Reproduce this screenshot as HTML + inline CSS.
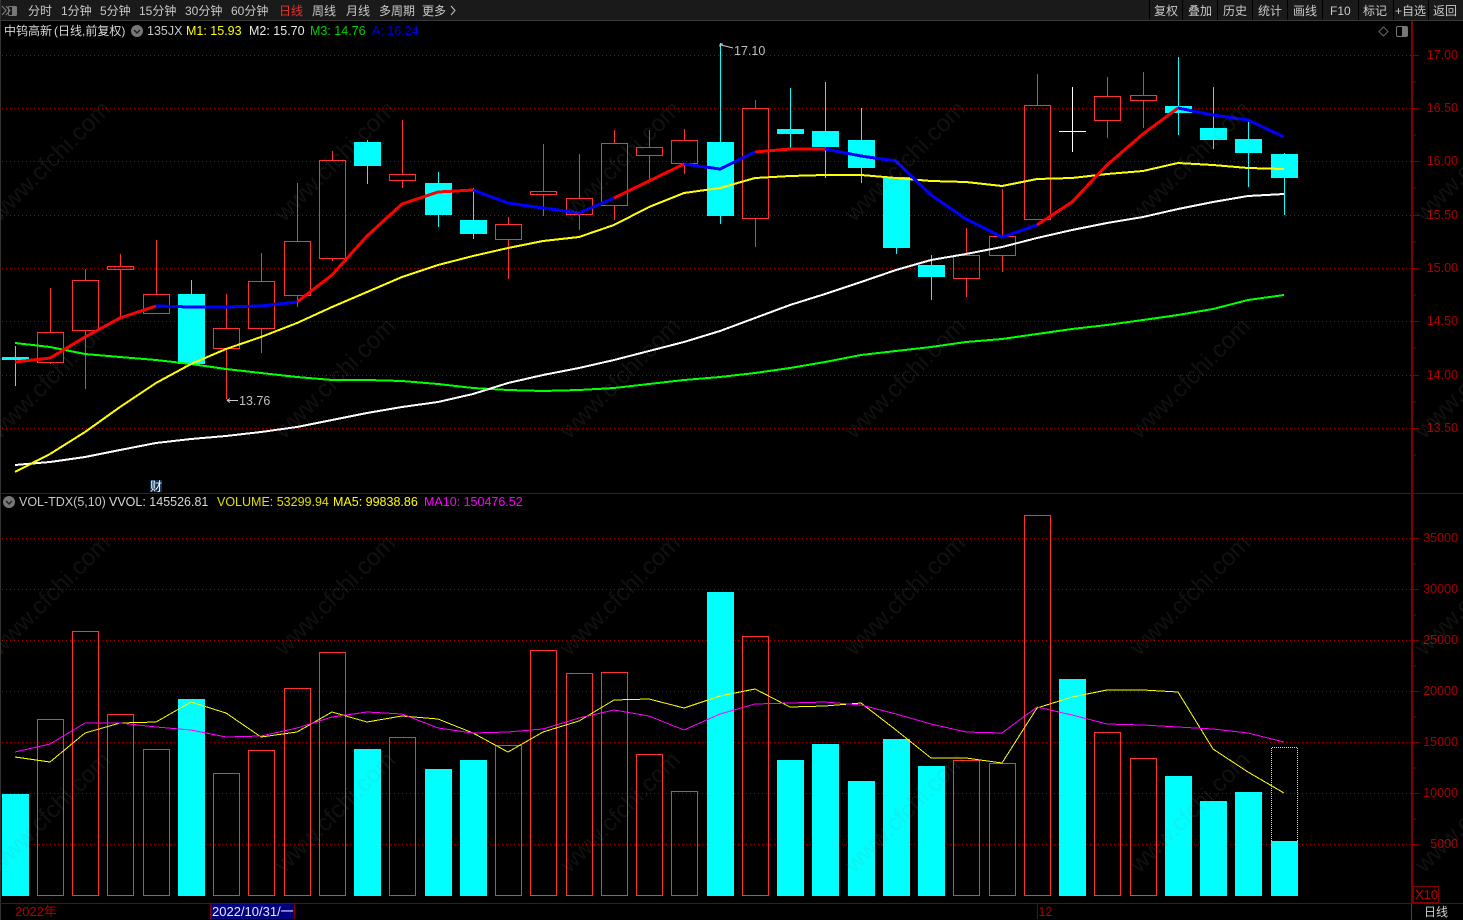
<!DOCTYPE html>
<html lang="zh"><head><meta charset="utf-8"><title>中钨高新</title>
<style>
html,body{margin:0;padding:0;background:#000;width:1463px;height:920px;overflow:hidden}
svg{display:block}
text{font-family:"Liberation Sans","Noto Sans CJK SC",sans-serif;white-space:pre}
.tb{font-size:12px;fill:#c8c8c8}
.inf{font-size:12.5px}
.ax{font-size:12.5px;fill:#a80000;text-anchor:end}
</style></head><body>
<svg width="1463" height="920" viewBox="0 0 1463 920" xmlns="http://www.w3.org/2000/svg">
<rect width="1463" height="920" fill="#000"/>
<!-- toolbar -->
<rect width="1463" height="20" fill="#1a1a1a"/>
<rect y="20" width="1463" height="1" fill="#3a3a3a"/>
<rect y="0" x="0" width="1" height="920" fill="#333"/>
<path d="M2 6l4 4.500-4 4.500M6 6l4 4.500-4 4.500" fill="none" stroke="#777" stroke-width="1.200"/>
<rect x="8.500" y="6.500" width="8" height="9" rx="1" fill="none" stroke="#777"/><rect x="12" y="7" width="4" height="8" fill="#777"/>
<text class="tb" x="28" y="15">分时</text><text class="tb" x="61" y="15">1分钟</text><text class="tb" x="100" y="15">5分钟</text><text class="tb" x="139" y="15">15分钟</text><text class="tb" x="185" y="15">30分钟</text><text class="tb" x="231" y="15">60分钟</text>
<text class="tb" x="279" y="15" style="fill:#e83030">日线</text><text class="tb" x="312" y="15">周线</text><text class="tb" x="346" y="15">月线</text><text class="tb" x="379" y="15">多周期</text><text class="tb" x="422" y="15">更多</text><path d="M451 6l4 4.500-4 4.500" fill="none" stroke="#c8c8c8"/>
<path d="M1149.500 0V20M1182.500 0V20M1217.500 0V20M1252.500 0V20M1287.500 0V20M1322.500 0V20M1358.500 0V20M1393.500 0V20M1428.500 0V20" stroke="#000" shape-rendering="crispEdges"/>
<text class="tb" x="1154" y="15">复权</text><text class="tb" x="1188" y="15">叠加</text><text class="tb" x="1223" y="15">历史</text><text class="tb" x="1258" y="15">统计</text><text class="tb" x="1293" y="15">画线</text><text class="tb" x="1330" y="15">F10</text><text class="tb" x="1363" y="15">标记</text><text class="tb" x="1395" y="15">+自选</text><text class="tb" x="1433" y="15">返回</text>
<!-- info -->
<text x="4" y="35" font-size="12" fill="#d8d8d8">中钨高新</text>
<text x="54" y="35" font-size="12" fill="#d8d8d8">(日线,前复权)</text>
<circle cx="137" cy="31" r="6" fill="#777"/><path d="M134 30l3 3 3-3" fill="none" stroke="#222" stroke-width="1.500"/>
<text class="inf" x="147" y="35" fill="#c8c8c8">135JX</text>
<text class="inf" x="186" y="35" fill="#ffff00">M1: 15.93</text>
<text class="inf" x="249" y="35" fill="#e8e8e8">M2: 15.70</text>
<text class="inf" x="310" y="35" fill="#00d000">M3: 14.76</text>
<text class="inf" x="372" y="35" fill="#0000e0">A: 16.24</text>
<path d="M1383.500 27l4.500 4.500-4.500 4.500-4.500-4.500z" fill="none" stroke="#666"/>
<rect x="1396.500" y="26.500" width="11" height="10" rx="1.500" fill="none" stroke="#777"/><rect x="1402" y="27" width="5" height="9" fill="#777"/>
<!-- grid -->
<path d="M2 55.500H1411M2 108.500H1411M2 161.500H1411M2 215.500H1411M2 268.500H1411M2 321.500H1411M2 375.500H1411M2 428.500H1411M2 538.500H1411M2 589.500H1411M2 640.500H1411M2 691.500H1411M2 742.500H1411M2 793.500H1411M2 844.500H1411" stroke="#aa0000" stroke-dasharray="1 3" shape-rendering="crispEdges" fill="none"/>
<!-- frame -->
<rect y="493" width="1463" height="1" fill="#800000"/>
<rect y="903" width="1463" height="1" fill="#800000"/>
<rect x="1411" y="21" width="2" height="882" fill="#800000"/>
<rect x="1411" y="904" width="1" height="16" fill="#444"/>
<path d="M1413 55.500h6M1413 82h3M1413 108.500h6M1413 135h3M1413 161.500h6M1413 188h3M1413 215.500h6M1413 242h3M1413 268.500h6M1413 295h3M1413 321.500h6M1413 348h3M1413 375.500h6M1413 402h3M1413 428.500h6M1413 455h3M1413 538.500h6M1413 564h3M1413 589.500h6M1413 615h3M1413 640.500h6M1413 666h3M1413 691.500h6M1413 717h3M1413 742.500h6M1413 768h3M1413 793.500h6M1413 819h3M1413 844.500h6" stroke="#800000" shape-rendering="crispEdges"/>
<!-- axis labels -->
<g class="ax"><text class="ax" x="1458" y="59">17.00</text><text class="ax" x="1458" y="112">16.50</text><text class="ax" x="1458" y="165">16.00</text><text class="ax" x="1458" y="219">15.50</text><text class="ax" x="1458" y="272">15.00</text><text class="ax" x="1458" y="325">14.50</text><text class="ax" x="1458" y="379">14.00</text><text class="ax" x="1458" y="432">13.50</text>
<text class="ax" x="1458" y="542">35000</text><text class="ax" x="1458" y="593">30000</text><text class="ax" x="1458" y="644">25000</text><text class="ax" x="1458" y="695">20000</text><text class="ax" x="1458" y="746">15000</text><text class="ax" x="1458" y="797">10000</text><text class="ax" x="1458" y="848">5000</text></g>
<rect x="1413.500" y="886.500" width="25" height="16" fill="none" stroke="#800000" shape-rendering="crispEdges"/>
<text x="1415" y="899" font-size="13" fill="#c00000">X10</text>
<text x="1424" y="916" font-size="12" fill="#d0d0d0">日线</text>
<!-- candles: red hollow -->
<path fill="none" stroke="#ff3232" shape-rendering="crispEdges" d="M37.500 332.500h26v30h-26zM50.500 288V332M50.500 363V364M72.500 280.500h26v50h-26zM85.500 269V280M85.500 331V389M107.500 266.500h26v3h-26zM120.500 254V266M120.500 270V318M143.500 294.500h26v19h-26zM156.500 240V294M213.500 328.500h26v20h-26zM226.500 294V328M226.500 349V399M248.500 281.500h26v47h-26zM261.500 253V281M261.500 329V353M284.500 241.500h26v54h-26zM297.500 183V241M297.500 296V307M319.500 160.500h26v98h-26zM332.500 151V160M332.500 259V261M389.500 174.500h26v6h-26zM402.500 120V174M402.500 181V188M495.500 224.500h26v15h-26zM508.500 217V224M508.500 240V279M530.500 191.500h26v3h-26zM543.500 144V191M543.500 195V216M566.500 198.500h26v16h-26zM579.500 154V198M579.500 215V230M601.500 143.500h26v62h-26zM614.500 130V143M614.500 206V220M636.500 147.500h26v8h-26zM649.500 130V147M649.500 156V180M671.500 140.500h26v23h-26zM684.500 129V140M684.500 164V174M742.500 108.500h26v110h-26zM755.500 100V108M755.500 219V247M953.500 255.500h26v23h-26zM966.500 228V255M966.500 279V297M989.500 236.500h26v19h-26zM1002.500 189V236M1002.500 256V272M1024.500 105.500h26v114h-26zM1037.500 74V105M1094.500 96.500h26v24h-26zM1107.500 77V96M1107.500 121V138M1130.500 95.500h26v5h-26zM1143.500 72V95M1143.500 101V128"/>
<path d="M1059 131.500h27M1072.500 87V152" stroke="#fff" fill="none" shape-rendering="crispEdges"/>
<!-- candles: cyan -->
<path stroke="#00ffff" fill="none" shape-rendering="crispEdges" d="M15.500 346V386M191.500 280V294M367.500 140V184M438.500 172V227M473.500 188V239M720.500 43V224M790.500 88V148M825.500 82V178M861.500 108V183M896.500 177V254M931.500 255V300M1178.500 57V135M1213.500 87V149M1248.500 120V187M1284.500 153V215"/>
<g fill="#00ffff" shape-rendering="crispEdges">
<rect x="2" y="357" width="27" height="3"/><rect x="178" y="294" width="27" height="70"/><rect x="354" y="142" width="27" height="24"/><rect x="425" y="183" width="27" height="32"/><rect x="460" y="220" width="27" height="14"/><rect x="707" y="142" width="27" height="74"/><rect x="777" y="129" width="27" height="5"/><rect x="812" y="131" width="27" height="16"/><rect x="848" y="140" width="27" height="28"/><rect x="883" y="177" width="27" height="71"/><rect x="918" y="265" width="27" height="12"/><rect x="1165" y="106" width="27" height="7"/><rect x="1200" y="128" width="27" height="12"/><rect x="1235" y="139" width="27" height="14"/><rect x="1271" y="154" width="27" height="24"/>
</g>
<!-- MA lines -->
<g fill="none" shape-rendering="crispEdges" stroke-linejoin="round">
<polyline stroke="#00ff00" stroke-width="2" points="15,343 50,347 85,354 120,357 156,360 191,364 226,369 261,373 297,377 332,380 367,380 402,381 438,384 473,388 508,390 543,391 579,390 614,388 649,384 684,380 720,377 755,373 790,368 825,362 861,355 896,351 931,347 966,342 1002,339 1037,334 1072,329 1107,325 1143,320 1178,315 1213,309 1248,300 1284,295"/>
<polyline stroke="#ffffff" stroke-width="2" points="15,465 50,462 85,457 120,450 156,443 191,439 226,436 261,432 297,427 332,420 367,413 402,407 438,402 473,394 508,383 543,375 579,368 614,360 649,351 684,342 720,331 755,318 790,305 825,294 861,282 896,270 931,260 966,254 1002,247 1037,238 1072,230 1107,223 1143,217 1178,209 1213,202 1248,196 1284,194"/>
<polyline stroke="#ffff00" stroke-width="2" points="15,472 50,454 85,432 120,407 156,383 191,364 226,349 261,337 297,323 332,307 367,292 402,277 438,265 473,256 508,248 543,241 579,237 614,225 649,207 684,193 720,188 755,178 790,176 825,175 861,175 896,178 931,181 966,182 1002,186 1037,179 1072,178 1107,174 1143,171 1178,163 1213,165 1248,168 1284,169"/>
<g stroke-width="3" stroke="#ff0000">
<polyline points="15,362 50,358 85,337 120,318 156,306"/>
<polyline points="297,302 332,275 367,236 402,204 438,192 473,190"/>
<polyline points="614,198 649,181 684,164"/>
<polyline points="755,152 790,149 825,149"/>
<polyline points="1037,225 1072,202 1107,165 1143,134 1178,108"/>
</g>
<g stroke-width="3" stroke="#0000ff">
<polyline points="156,306 191,307 226,307 261,306 297,302"/>
<polyline points="473,190 508,203 543,208 579,213 614,198"/>
<polyline points="684,164 720,169 755,152"/>
<polyline points="825,149 861,156 896,161 931,195 966,219 1002,237 1037,225"/>
<polyline points="1178,108 1213,115 1248,120 1284,137"/>
</g>
</g>
<!-- annotations -->
<path d="M720 44h3M720 44v3M721 45l12 3" stroke="#ccc" fill="none"/>
<text x="734" y="55" font-size="12.500" fill="#c0c0c0">17.10</text>
<path d="M227 400.500h11M227 400.500l3-2M227 400.500l3 2" stroke="#ccc" fill="none"/>
<text x="239" y="405" font-size="12.500" fill="#c0c0c0">13.76</text>
<rect x="150" y="480" width="12" height="12" fill="#0f2f52"/>
<text x="150" y="490.500" font-size="12" fill="#fff">财</text>
<!-- vol info -->
<circle cx="9" cy="502" r="6" fill="#777"/><path d="M6 501l3 3 3-3" fill="none" stroke="#222" stroke-width="1.500"/>
<text class="inf" x="19" y="506" fill="#c8c8c8">VOL-TDX(5,10)</text>
<text class="inf" x="109" y="506" fill="#d8d8d8">VVOL: 145526.81</text>
<text class="inf" x="217" y="506" fill="#e0e000">VOLUME: 53299.94</text>
<text class="inf" x="333" y="506" fill="#ffff00">MA5: 99838.86</text>
<text class="inf" x="424" y="506" fill="#ff00ff">MA10: 150476.52</text>
<!-- volume bars -->
<path fill="none" stroke="#ff3232" shape-rendering="crispEdges" d="M37.500 719.500h26v176h-26zM72.500 631.500h26v264h-26zM107.500 714.500h26v181h-26zM143.500 749.500h26v146h-26zM213.500 773.500h26v122h-26zM248.500 750.500h26v145h-26zM284.500 688.500h26v207h-26zM319.500 652.500h26v243h-26zM389.500 737.500h26v158h-26zM495.500 745.500h26v150h-26zM530.500 650.500h26v245h-26zM566.500 673.500h26v222h-26zM601.500 672.500h26v223h-26zM636.500 754.500h26v141h-26zM671.500 791.500h26v104h-26zM742.500 636.500h26v259h-26zM953.500 760.500h26v135h-26zM989.500 763.500h26v132h-26zM1024.500 515.500h26v380h-26zM1094.500 732.500h26v163h-26zM1130.500 758.500h26v137h-26z"/>
<g fill="#00ffff" shape-rendering="crispEdges">
<rect x="2" y="794" width="27" height="102"/><rect x="178" y="699" width="27" height="197"/><rect x="354" y="749" width="27" height="147"/><rect x="425" y="769" width="27" height="127"/><rect x="460" y="760" width="27" height="136"/><rect x="707" y="592" width="27" height="304"/><rect x="777" y="760" width="27" height="136"/><rect x="812" y="744" width="27" height="152"/><rect x="848" y="781" width="27" height="115"/><rect x="883" y="739" width="27" height="157"/><rect x="918" y="766" width="27" height="130"/><rect x="1059" y="679" width="27" height="217"/><rect x="1165" y="776" width="27" height="120"/><rect x="1200" y="801" width="27" height="95"/><rect x="1235" y="792" width="27" height="104"/><rect x="1271" y="841" width="27" height="55"/>
</g>
<path d="M1271.500 841V747.500H1297.500V841" fill="none" stroke="#e8e84a" stroke-dasharray="1 1" shape-rendering="crispEdges"/>
<g fill="none" shape-rendering="crispEdges">
<polyline stroke="#ffff00" points="15,757 50,762 85,733 120,723 156,722 191,702 226,713 261,737 297,732 332,712 367,722 402,716 438,719 473,733 508,752 543,732 579,721 614,700 649,699 684,708 720,696 755,689 790,707 825,706 861,703 896,730 931,758 966,758 1002,763 1037,708 1072,697 1107,690 1143,690 1178,692 1213,749 1248,772 1284,793"/>
<polyline stroke="#ff00ff" points="15,752 50,744 85,723 120,723 156,727 191,730 226,737 261,736 297,728 332,717 367,712 402,714 438,728 473,733 508,732 543,729 579,718 614,710 649,716 684,730 720,714 755,704 790,703 825,702 861,705 896,714 931,724 966,732 1002,733 1037,707 1072,715 1107,724 1143,725 1178,727 1213,729 1248,733 1284,742"/>
</g>
<!-- bottom axis -->
<text x="15" y="916" font-size="13" fill="#b00000">2022年</text>
<rect x="211" y="904" width="84" height="15" fill="#00007f"/>
<path d="M210.500 903V919M294.500 903V919" stroke="#800000" shape-rendering="crispEdges"/>
<text x="212" y="916" font-size="13" fill="#e8e8ff">2022/10/31/一</text>
<path d="M1037.500 904V919" stroke="#800000" shape-rendering="crispEdges"/>
<text x="1038.500" y="916" font-size="12.500" fill="#b00000">12</text>
<!-- watermark -->
<g font-size="24" fill="#808080" fill-opacity="0.13" text-anchor="middle">
<text transform="translate(50,161) rotate(-45) translate(0,8)">www.cfchi.com</text><text transform="translate(335,161) rotate(-45) translate(0,8)">www.cfchi.com</text><text transform="translate(620,161) rotate(-45) translate(0,8)">www.cfchi.com</text><text transform="translate(905,161) rotate(-45) translate(0,8)">www.cfchi.com</text><text transform="translate(1190,161) rotate(-45) translate(0,8)">www.cfchi.com</text><text transform="translate(1475,161) rotate(-45) translate(0,8)">www.cfchi.com</text>
<text transform="translate(50,378) rotate(-45) translate(0,8)">www.cfchi.com</text><text transform="translate(335,378) rotate(-45) translate(0,8)">www.cfchi.com</text><text transform="translate(620,378) rotate(-45) translate(0,8)">www.cfchi.com</text><text transform="translate(905,378) rotate(-45) translate(0,8)">www.cfchi.com</text><text transform="translate(1190,378) rotate(-45) translate(0,8)">www.cfchi.com</text><text transform="translate(1475,378) rotate(-45) translate(0,8)">www.cfchi.com</text>
<text transform="translate(50,595) rotate(-45) translate(0,8)">www.cfchi.com</text><text transform="translate(335,595) rotate(-45) translate(0,8)">www.cfchi.com</text><text transform="translate(620,595) rotate(-45) translate(0,8)">www.cfchi.com</text><text transform="translate(905,595) rotate(-45) translate(0,8)">www.cfchi.com</text><text transform="translate(1190,595) rotate(-45) translate(0,8)">www.cfchi.com</text><text transform="translate(1475,595) rotate(-45) translate(0,8)">www.cfchi.com</text>
<text transform="translate(50,812) rotate(-45) translate(0,8)">www.cfchi.com</text><text transform="translate(335,812) rotate(-45) translate(0,8)">www.cfchi.com</text><text transform="translate(620,812) rotate(-45) translate(0,8)">www.cfchi.com</text><text transform="translate(905,812) rotate(-45) translate(0,8)">www.cfchi.com</text><text transform="translate(1190,812) rotate(-45) translate(0,8)">www.cfchi.com</text><text transform="translate(1475,812) rotate(-45) translate(0,8)">www.cfchi.com</text>
</g>
</svg>
</body></html>
